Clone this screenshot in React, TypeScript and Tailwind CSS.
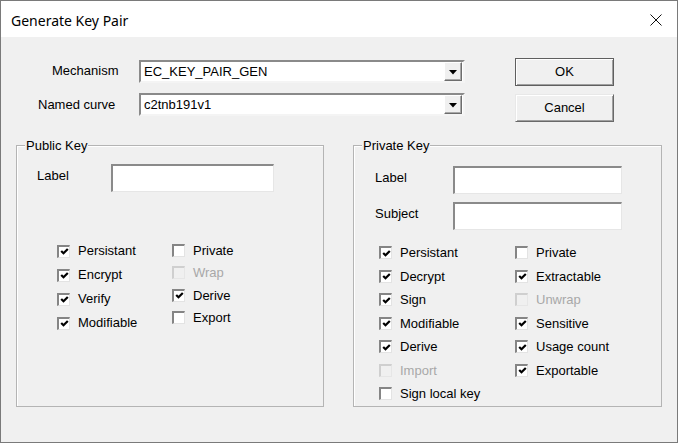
import React from "react";

type Check = { label: string; checked?: boolean; disabled?: boolean };

const CheckMark = () => (
  <svg width="9" height="9" viewBox="0 0 9 9" className="block">
    <path d="M1.2 4 L3.5 6.3 L7.8 2" fill="none" stroke="#000" strokeWidth="2.2" />
  </svg>
);

const CheckBox = ({ label, checked, disabled }: Check) => (
  <div className="flex items-center gap-[8px] h-full">
    <div
      className={`w-[13px] h-[13px] flex items-center justify-center border-t-2 border-l-2 border-r border-b ${
        disabled
          ? "bg-[#f0f0f0] border-t-[#cfcfcf] border-l-[#cfcfcf] border-r-[#e6e6e6] border-b-[#e6e6e6]"
          : "bg-white border-t-[#858585] border-l-[#858585] border-r-[#e3e3e3] border-b-[#e3e3e3]"
      }`}
    >
      {checked && <CheckMark />}
    </div>
    <span className={disabled ? "text-[#a8a8a8]" : "text-black"}>{label}</span>
  </div>
);

const Edit = ({ w }: { w: string }) => (
  <div
    className={`${w} h-[28px] bg-white border-t-2 border-l-2 border-r border-b border-t-[#8a8a8a] border-l-[#8a8a8a] border-r-[#e6e6e6] border-b-[#e6e6e6]`}
  />
);

const Combo = ({ value }: { value: string }) => (
  <div className="w-[326px] h-[23px] bg-white flex items-center border-2 border-t-[#8a8a8a] border-l-[#8a8a8a] border-r-[#f4f4f4] border-b-[#f4f4f4]">
    <span className="flex-1 pl-[3px] leading-none">{value}</span>
    <div className="w-[18px] h-[19px] mr-[1px] bg-[#f0f0f0] flex items-center justify-center border border-t-white border-l-white border-r-[#6d6d6d] border-b-[#6d6d6d] shadow-[inset_-1px_-1px_#a8a8a8]">
      <svg width="8" height="5" viewBox="0 0 8 5" className="mt-[2px]">
        <path d="M0 0 H8 L4 4.5 Z" fill="#000" />
      </svg>
    </div>
  </div>
);

const Group = ({
  title,
  className,
  children,
}: {
  title: string;
  className: string;
  children: React.ReactNode;
}) => (
  <div className={`relative h-[262px] border border-[#b4b4b4] shadow-[inset_1px_1px_#fff] ${className}`}>
    <span className="absolute left-[8px] -top-[8px] px-[1px] bg-[#f0f0f0] leading-[15px]">
      {title}
    </span>
    {children}
  </div>
);

const App = () => {
  return (
    <div className="w-[678px] h-[443px] flex flex-col border border-[#7a7a7a] bg-[#f0f0f0] text-[13px] text-black font-['Liberation_Sans',Arial,sans-serif]">
      <div className="h-[36px] bg-white flex items-center justify-between pl-[10px] pr-[15px]">
        <span className="text-[14px] font-['Noto_Sans','Open_Sans',sans-serif] mt-[2px]">
          Generate Key Pair
        </span>
        <svg width="12" height="12" viewBox="0 0 12 12" className="mt-[2px]">
          <path d="M0.5 0.5 L11.5 11.5 M11.5 0.5 L0.5 11.5" stroke="#111" strokeWidth="1" />
        </svg>
      </div>

      <div className="flex-1 pt-[21px]">
        <div className="flex items-start">
          <div className="flex flex-col gap-[10px] pt-[2px]">
            <div className="flex items-center">
              <span className="w-[138px] pl-[51px] -mt-[1px]">Mechanism</span>
              <Combo value="EC_KEY_PAIR_GEN" />
            </div>
            <div className="flex items-center">
              <span className="w-[138px] pl-[37px]">Named curve</span>
              <Combo value="c2tnb191v1" />
            </div>
          </div>
          <div className="ml-[50px] flex flex-col gap-[8px]">
            <button className="w-[99px] h-[28px] bg-[#f0f0f0] border border-[#5f5f5f] shadow-[inset_1px_1px_#fff,inset_-1px_-1px_#a0a0a0]">
              OK
            </button>
            <button className="w-[99px] h-[28px] bg-[#f0f0f0] border border-t-[#e8e8e8] border-l-[#e8e8e8] border-r-[#696969] border-b-[#696969] shadow-[inset_1px_1px_#fff,inset_-1px_-1px_#a0a0a0]">
              Cancel
            </button>
          </div>
        </div>

        <div className="flex mt-[23px]">
          <Group title="Public Key" className="ml-[15px] w-[308px]">
            <div className="flex items-center pt-[18px]">
              <span className="w-[94px] pl-[20px] -mt-[4px]">Label</span>
              <Edit w="w-[163px]" />
            </div>
            <div className="flex mt-[47px] pl-[40px]">
              <div className="w-[115px] flex flex-col">
                {[
                  { label: "Persistant", checked: true },
                  { label: "Encrypt", checked: true },
                  { label: "Verify", checked: true },
                  { label: "Modifiable", checked: true },
                ].map((c) => (
                  <div key={c.label} className="h-[24px]">
                    <CheckBox {...c} />
                  </div>
                ))}
              </div>
              <div className="flex flex-col">
                {[
                  { label: "Private" },
                  { label: "Wrap", disabled: true },
                  { label: "Derive", checked: true },
                  { label: "Export" },
                ].map((c) => (
                  <div key={c.label} className="h-[22.5px]">
                    <CheckBox {...c} />
                  </div>
                ))}
              </div>
            </div>
          </Group>

          <Group title="Private Key" className="ml-[29px] w-[309px]">
            <div className="flex flex-col gap-[8px] pt-[20px]">
              <div className="flex items-center">
                <span className="w-[99px] pl-[21px] -mt-[4px]">Label</span>
                <Edit w="w-[169px]" />
              </div>
              <div className="flex items-center">
                <span className="w-[99px] pl-[21px] -mt-[4px]">Subject</span>
                <Edit w="w-[169px]" />
              </div>
            </div>
            <div className="flex mt-[11px] pl-[25px]">
              <div className="w-[136px] flex flex-col">
                {[
                  { label: "Persistant", checked: true },
                  { label: "Decrypt", checked: true },
                  { label: "Sign", checked: true },
                  { label: "Modifiable", checked: true },
                  { label: "Derive", checked: true },
                  { label: "Import", disabled: true },
                  { label: "Sign local key" },
                ].map((c) => (
                  <div key={c.label} className="h-[23.5px]">
                    <CheckBox {...c} />
                  </div>
                ))}
              </div>
              <div className="flex flex-col">
                {[
                  { label: "Private" },
                  { label: "Extractable", checked: true },
                  { label: "Unwrap", disabled: true },
                  { label: "Sensitive", checked: true },
                  { label: "Usage count", checked: true },
                  { label: "Exportable", checked: true },
                ].map((c) => (
                  <div key={c.label} className="h-[23.5px]">
                    <CheckBox {...c} />
                  </div>
                ))}
              </div>
            </div>
          </Group>
        </div>
      </div>
    </div>
  );
};

export default App;
